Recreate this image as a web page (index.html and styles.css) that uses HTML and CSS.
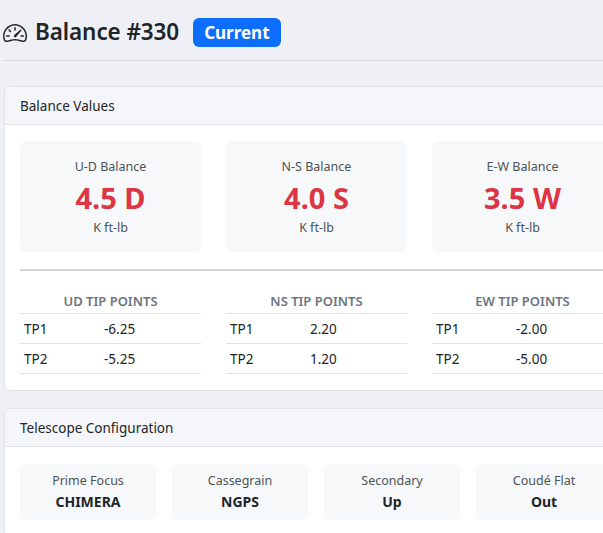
FILE: index.html
```html
<!DOCTYPE html>
<html>
<head>
<meta charset="utf-8">
<link rel="stylesheet" href="styles.css">
</head>
<body>
<div class="page">
  <div class="title-row">
    <h1 class="title">
      <svg class="title-icon" viewBox="0 0 16 16" width="24" height="24" fill="currentColor">
        <path d="M8 4a.5.5 0 0 1 .5.5V6a.5.5 0 0 1-1 0V4.5A.5.5 0 0 1 8 4M3.732 5.732a.5.5 0 0 1 .707 0l.915.914a.5.5 0 1 1-.708.708l-.914-.915a.5.5 0 0 1 0-.707M2 10a.5.5 0 0 1 .5-.5h1.586a.5.5 0 0 1 0 1H2.5A.5.5 0 0 1 2 10m9.5 0a.5.5 0 0 1 .5-.5h1.5a.5.5 0 0 1 0 1H12a.5.5 0 0 1-.5-.5m.754-4.246a.39.39 0 0 0-.527-.02L7.547 9.31a.91.91 0 1 0 1.302 1.258l3.434-4.297a.39.39 0 0 0-.029-.518z"/>
        <path fill-rule="evenodd" d="M0 10a8 8 0 1 1 15.547 2.661c-.442 1.253-1.845 1.602-2.932 1.25C11.309 13.488 9.475 13 8 13c-1.474 0-3.31.488-4.615.911-1.087.352-2.490.003-2.932-1.25A8 8 0 0 1 0 10m8-7a7 7 0 0 0-6.603 9.329c.203.575.923.876 1.68.63C4.397 12.533 6.358 12 8 12s3.604.532 4.923.96c.757.245 1.477-.056 1.68-.631A7 7 0 0 0 8 3"/>
      </svg>
      <span>Balance #330</span>
    </h1>
    <span class="badge">Current</span>
  </div>
  <hr class="top-rule">

  <section class="card">
    <div class="card-header">Balance Values</div>
    <div class="card-body">
      <div class="grid3">
        <div class="stat">
          <div class="stat-label">U-D Balance</div>
          <div class="stat-value">4.5 D</div>
          <div class="stat-unit">K ft-lb</div>
        </div>
        <div class="stat">
          <div class="stat-label">N-S Balance</div>
          <div class="stat-value">4.0 S</div>
          <div class="stat-unit">K ft-lb</div>
        </div>
        <div class="stat">
          <div class="stat-label">E-W Balance</div>
          <div class="stat-value">3.5 W</div>
          <div class="stat-unit">K ft-lb</div>
        </div>
      </div>
      <hr class="mid-rule">
      <div class="grid3">
        <div class="tips">
          <div class="tips-title">UD TIP POINTS</div>
          <table class="tip-table">
            <tr><td class="tp">TP1</td><td>-6.25</td></tr>
            <tr><td class="tp">TP2</td><td>-5.25</td></tr>
          </table>
        </div>
        <div class="tips">
          <div class="tips-title">NS TIP POINTS</div>
          <table class="tip-table">
            <tr><td class="tp">TP1</td><td>2.20</td></tr>
            <tr><td class="tp">TP2</td><td>1.20</td></tr>
          </table>
        </div>
        <div class="tips">
          <div class="tips-title">EW TIP POINTS</div>
          <table class="tip-table">
            <tr><td class="tp">TP1</td><td>-2.00</td></tr>
            <tr><td class="tp">TP2</td><td>-5.00</td></tr>
          </table>
        </div>
      </div>
    </div>
  </section>

  <section class="card">
    <div class="card-header">Telescope Configuration</div>
    <div class="card-body cfg-body">
      <div class="grid4">
        <div class="cfg"><div class="cfg-label">Prime Focus</div><div class="cfg-value">CHIMERA</div></div>
        <div class="cfg"><div class="cfg-label">Cassegrain</div><div class="cfg-value">NGPS</div></div>
        <div class="cfg"><div class="cfg-label">Secondary</div><div class="cfg-value">Up</div></div>
        <div class="cfg"><div class="cfg-label">Coudé Flat</div><div class="cfg-value">Out</div></div>
      </div>
    </div>
  </section>
</div>
</body>
</html>
```

FILE: styles.css
```css
html, body {
  margin: 0;
  padding: 0;
  overflow: hidden;
}
body {
  background: #eef0f5;
  font-family: "Noto Sans", "Open Sans", sans-serif;
  color: #212529;
  font-size: 14px;
}
.page {
  width: 625px;
  padding: 0 0 0 4px;
}
.title-row {
  display: flex;
  align-items: center;
  gap: 14px;
  padding-top: 17px;
  height: 31px;
}
.title {
  margin: 0;
  display: flex;
  align-items: center;
  gap: 8px;
  font-size: 22.5px;
  font-weight: 600;
  line-height: 1;
  margin-left: -1px;
  letter-spacing: -0.1px;
}
.title-icon {
  display: block;
  margin-top: 1px;
}
.badge {
  background: #0d6efd;
  color: #fff;
  font-weight: 700;
  font-size: 17px;
  border-radius: 6px;
  padding: 0 11px;
  height: 29px;
  display: flex;
  align-items: center;
}
.top-rule {
  border: 0;
  border-top: 1px solid #d9dce2;
  margin: 12px 0 25px -1px;
}
.card {
  background: #fff;
  border: 1px solid #dfe2e7;
  border-radius: 6px;
  margin-bottom: 17px;
  overflow: hidden;
}
.card-header {
  background: #f5f6f9;
  border-bottom: 1px solid #dfe2e7;
  height: 37px;
  padding: 0 15px;
  display: flex;
  align-items: center;
  font-size: 13.5px;
}
.card-body {
  padding: 16px 15px;
}
.cfg-body {
  padding-top: 17px;
}
.grid3 {
  display: grid;
  grid-template-columns: repeat(3, 181px);
  column-gap: 25px;
}
.stat {
  background: #f7f8fa;
  border-radius: 6px;
  height: 111px;
  text-align: center;
  display: flex;
  flex-direction: column;
  align-items: center;
  padding-top: 17px;
  box-sizing: border-box;
}
.stat-label {
  font-size: 12.5px;
  color: #4d5358;
  line-height: 18px;
}
.stat-value {
  font-size: 29px;
  font-weight: 700;
  color: #dc3545;
  line-height: 34px;
  margin-top: 5px;
}
.stat-unit {
  font-size: 12.5px;
  color: #4d5358;
  line-height: 18px;
  margin-top: 4px;
}
.mid-rule {
  border: 0;
  border-top: 2px solid #d3d5d9;
  margin: 17px 0 21px 0;
}
.tips-title {
  text-align: center;
  font-size: 13px;
  font-weight: 600;
  color: #6c757d;
  line-height: 18px;
  padding-bottom: 3px;
}
.tip-table {
  width: 100%;
  border-collapse: collapse;
  font-size: 13.5px;
}
.tip-table tr {
  border-top: 1px solid #dee2e6;
  border-bottom: 1px solid #dee2e6;
}
.tip-table td {
  height: 30px;
  padding: 0 4px;
  box-sizing: border-box;
}
.tip-table td.tp {
  width: 80px;
}
.grid4 {
  display: grid;
  grid-template-columns: repeat(4, 136px);
  column-gap: 16px;
}
.cfg {
  background: #f7f8fa;
  border-radius: 6px;
  height: 56px;
  text-align: center;
  display: flex;
  flex-direction: column;
  justify-content: center;
}
.cfg-label {
  font-size: 12.5px;
  color: #4d5358;
  line-height: 18px;
}
.cfg-value {
  font-size: 14px;
  font-weight: 700;
  color: #212529;
  line-height: 20px;
  margin-top: 2px;
}
```
